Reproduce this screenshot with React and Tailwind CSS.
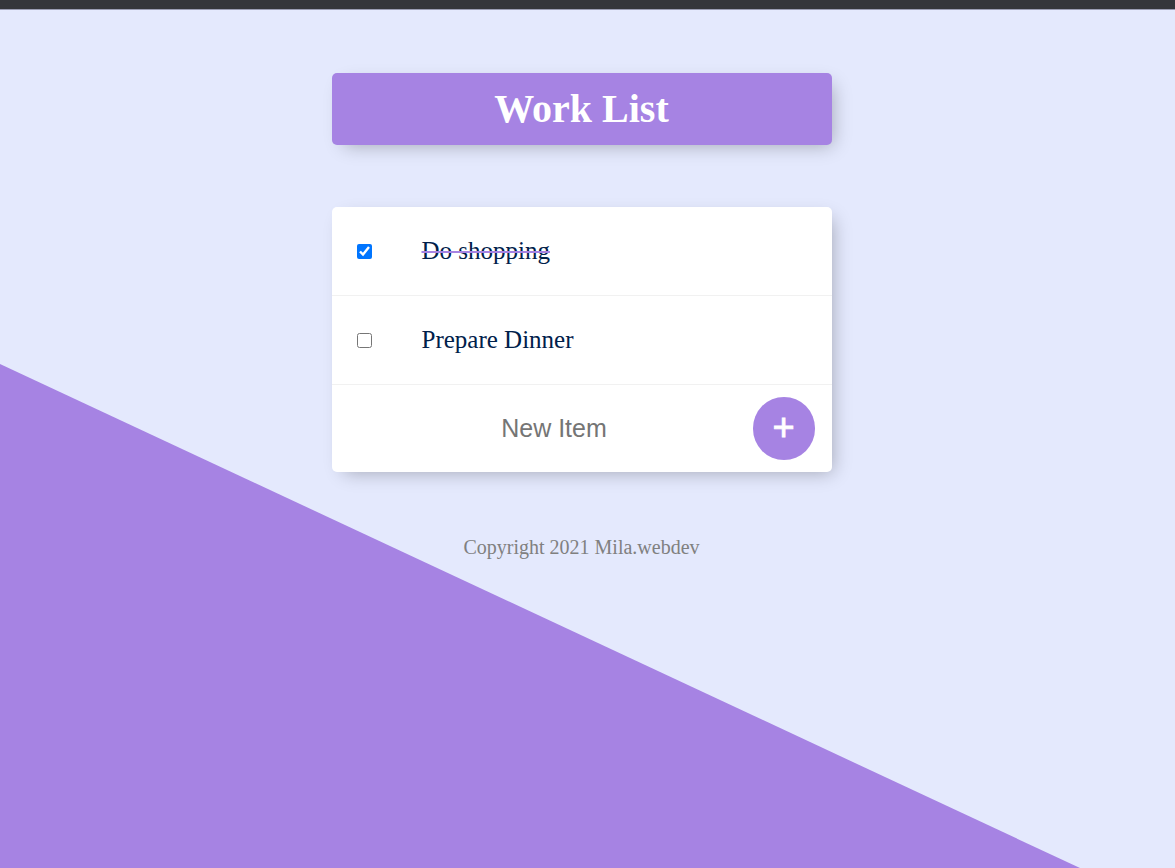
import React from "react";

export default function App() {
  return (
    <div className="w-[1175px] h-[868px] overflow-hidden flex flex-col bg-[#E4E9FD]">
      <div className="h-[9px] bg-[#35363a] shrink-0" />
      <div className="h-px bg-[#9b9db2] shrink-0" />
      <div className="relative flex-1">
        <div className="absolute inset-0 bg-[#A683E3] [clip-path:polygon(0_354px,1080px_858px,0_858px)]" />
        <div className="relative flex flex-col items-center pr-3 pt-[63px]">
          <div className="w-[500px] h-[72px] rounded-[5px] bg-[#A683E3] flex items-center justify-center shadow-[6px_6px_18px_-6px_rgba(0,0,0,0.3)]">
            <h1 className="text-white text-[40px] font-bold leading-none" style={{ fontFamily: '"Liberation Serif", "Times New Roman", serif' }}>
              Work List
            </h1>
          </div>

          <div className="mt-[62px] w-[500px] bg-white rounded-[5px] shadow-[6px_6px_18px_-6px_rgba(0,0,0,0.3)]">
            <div className="h-[89px] flex items-center border-b border-[#F1F1F1]">
              <input type="checkbox" defaultChecked className="w-[15px] h-[15px] m-0 ml-[25px]" />
              <p className="ml-[50px] text-[25px] text-[#00204a] line-through decoration-[#A683E3] decoration-2" style={{ fontFamily: '"Liberation Serif", "Times New Roman", serif' }}>
                Do shopping
              </p>
            </div>
            <div className="h-[89px] flex items-center border-b border-[#F1F1F1]">
              <input type="checkbox" className="w-[15px] h-[15px] m-0 ml-[25px]" />
              <p className="ml-[50px] text-[25px] text-[#00204a]" style={{ fontFamily: '"Liberation Serif", "Times New Roman", serif' }}>
                Prepare Dinner
              </p>
            </div>
            <div className="h-[87px] flex items-center">
              <input
                type="text"
                placeholder="New Item"
                className="flex-1 min-w-0 pl-6 h-[60px] text-center text-[25px] outline-none placeholder:text-[#757575] bg-transparent"
                style={{ fontFamily: '"Liberation Sans", Arial, sans-serif' }}
              />
              <button className="w-[62px] h-[63px] mr-[17px] rounded-full bg-[#A683E3] text-white flex items-center justify-center text-[38px] font-normal leading-none pb-[3px] [-webkit-text-stroke:0.8px_white]" style={{ fontFamily: '"Liberation Sans", Arial, sans-serif' }}>
                +
              </button>
            </div>
          </div>

          <p className="mt-[60px] text-[20px] text-[#808080]" style={{ fontFamily: '"Liberation Serif", "Times New Roman", serif' }}>
            Copyright 2021 Mila.webdev
          </p>
        </div>
      </div>
    </div>
  );
}
